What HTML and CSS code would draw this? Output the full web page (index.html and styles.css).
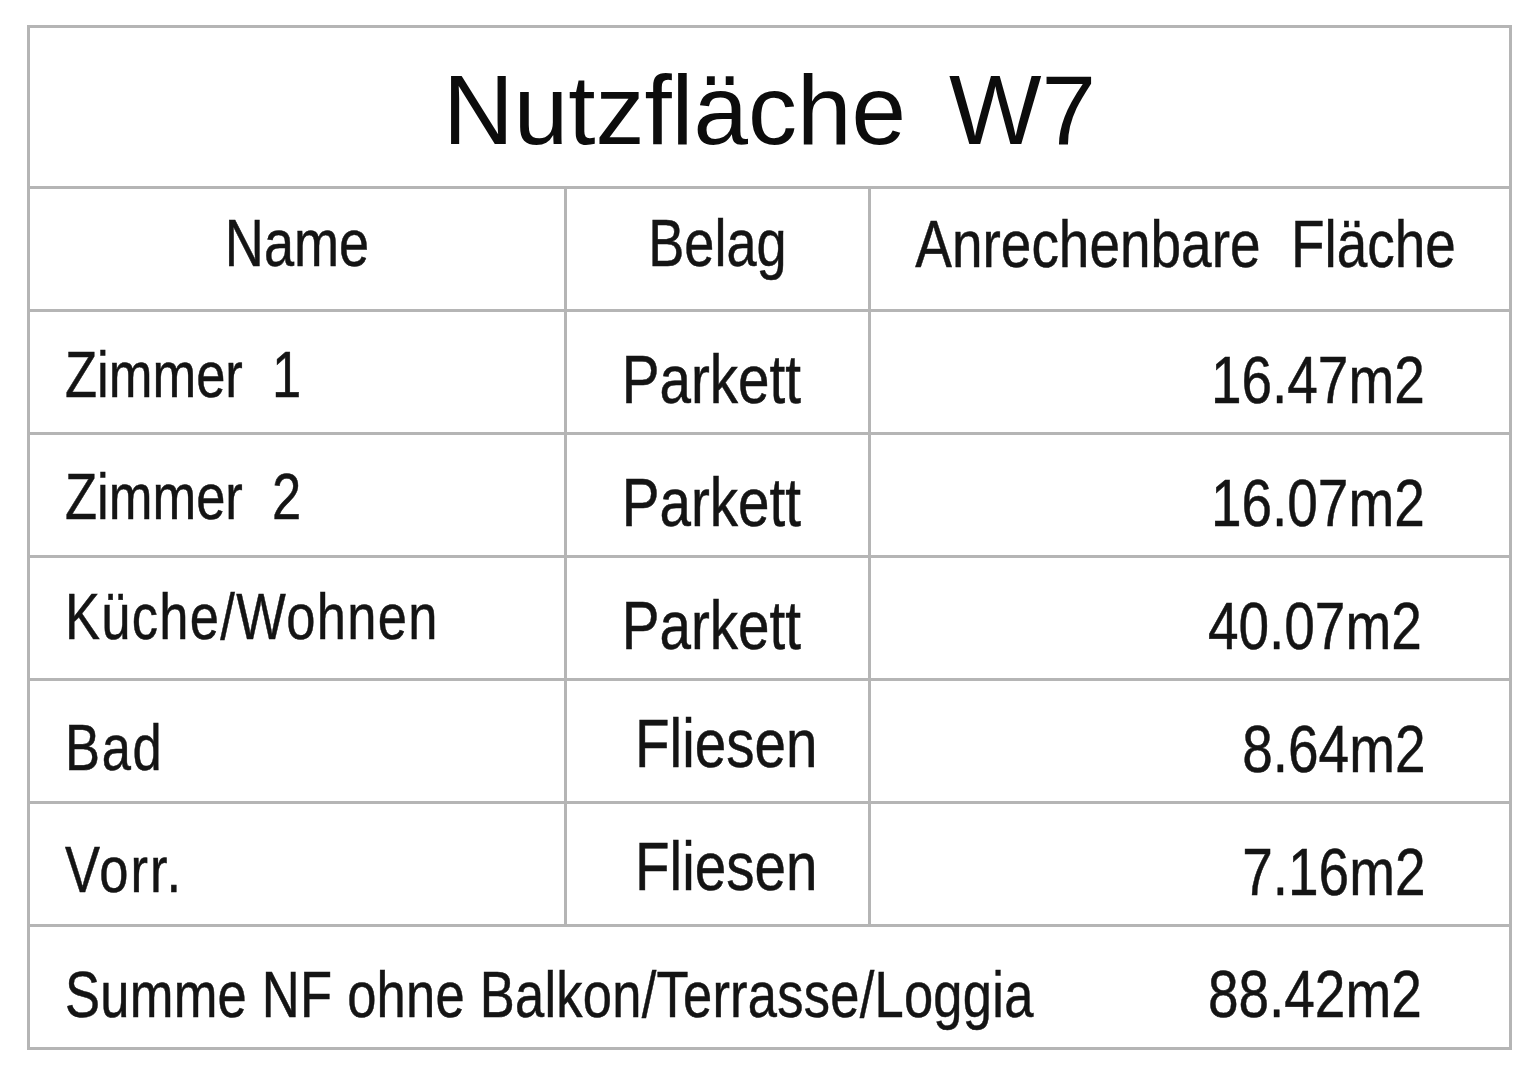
FILE: index.html
```html
<!DOCTYPE html>
<html lang="de">
<head>
<meta charset="utf-8">
<title>Nutzfläche W7</title>
<link rel="stylesheet" href="styles.css">
</head>
<body>
<table class="area">
  <colgroup>
    <col class="c-name">
    <col class="c-belag">
    <col class="c-flaeche">
  </colgroup>
  <tr class="title-row">
    <td colspan="3" class="title">Nutzfläche W7</td>
  </tr>
  <tr class="row">
    <td class="h"><span class="n mid">Name</span></td>
    <td class="h"><span class="n mid">Belag</span></td>
    <td class="h h3"><span class="n mid wide">Anrechenbare&nbsp; Fläche</span></td>
  </tr>
  <tr class="row">
    <td class="name r1"><span class="n lft">Zimmer&nbsp; 1</span></td>
    <td class="belag pk"><span class="n mid">Parkett</span></td>
    <td class="val"><span class="n rgt">16.47m2</span></td>
  </tr>
  <tr class="row">
    <td class="name r2"><span class="n lft">Zimmer&nbsp; 2</span></td>
    <td class="belag pk"><span class="n mid">Parkett</span></td>
    <td class="val"><span class="n rgt">16.07m2</span></td>
  </tr>
  <tr class="row">
    <td class="name r3"><span class="n lft">Küche/Wohnen</span></td>
    <td class="belag pk"><span class="n mid">Parkett</span></td>
    <td class="val v3"><span class="n rgt">40.07m2</span></td>
  </tr>
  <tr class="row">
    <td class="name r4"><span class="n lft">Bad</span></td>
    <td class="belag fl"><span class="n mid">Fliesen</span></td>
    <td class="val"><span class="n rgt">8.64m2</span></td>
  </tr>
  <tr class="row">
    <td class="name r5"><span class="n lft">Vorr.</span></td>
    <td class="belag fl"><span class="n mid">Fliesen</span></td>
    <td class="val"><span class="n rgt">7.16m2</span></td>
  </tr>
  <tr class="row">
    <td colspan="3" class="sum">
      <div class="sum-inner">
        <span class="sum-label"><span class="n lft">Summe NF ohne Balkon/Terrasse/Loggia</span></span>
        <span class="n rgt sum-val">88.42m2</span>
      </div>
    </td>
  </tr>
</table>
</body>
</html>
```

FILE: styles.css
```css
html, body {
  margin: 0;
  padding: 0;
  background: #ffffff;
}

body {
  padding: 25px 0 0 27px;
}

.area {
  border-collapse: collapse;
  table-layout: fixed;
  width: 1482px;
  color: #141414;
  font-family: "Liberation Sans", Arial, sans-serif;
}

.area td {
  border: 3px solid #b5b5b5;
  padding: 0;
  white-space: nowrap;
  vertical-align: middle;
}

.c-name { width: 537px; }
.c-belag { width: 304px; }
.c-flaeche { width: 641px; }

.title-row { height: 161px; }
.row { height: 123px; }

/* narrow (condensed) lettering, like Arial Narrow */
.n {
  display: inline-block;
  transform: scaleX(0.82);
  -webkit-text-stroke: 0.5px currentColor;
}
.n.lft { transform-origin: left center; }
.n.mid { transform-origin: center center; }
.n.rgt { transform-origin: right center; }
.n.wide { margin: 0 -80px; }

.area td.title {
  font-size: 98px;
  word-spacing: 16px;
  text-align: center;
  padding-top: 6px;
  color: #0c0c0c;
}

.area td.h {
  text-align: center;
  font-size: 66px;
  padding-bottom: 12px;
}
.area td.h3 {
  font-size: 67px;
  padding-right: 9px;
}

.area td.name {
  font-size: 64px;
  padding-left: 35px;
}
.area td.r1 { padding-top: 6px; }
.area td.r2 { padding-top: 4px; }
.area td.r3 { padding-bottom: 3px; letter-spacing: 1.6px; }
.area td.r4 { padding-top: 14px; letter-spacing: 2px; }
.area td.r5 { padding-top: 12px; letter-spacing: 2.5px; }

.area td.belag {
  font-size: 69px;
  text-align: center;
}
.area td.pk {
  padding-top: 14px;
  padding-right: 12px;
}
.area td.fl {
  padding-top: 4px;
  padding-left: 18px;
}

.area td.val {
  font-size: 67px;
  text-align: right;
  padding-right: 84px;
  padding-top: 14px;
}
.area td.v3 {
  padding-right: 87px;
}

.area td.sum {
  padding-top: 12px;
}

.sum-inner {
  display: flex;
  align-items: baseline;
  padding-left: 35px;
  padding-right: 87px;
}

.sum-label {
  flex: 1 1 auto;
  min-width: 0;
  font-size: 64px;
  letter-spacing: 0.3px;
}

.sum-val {
  flex: 0 0 auto;
  font-size: 67px;
}
```
